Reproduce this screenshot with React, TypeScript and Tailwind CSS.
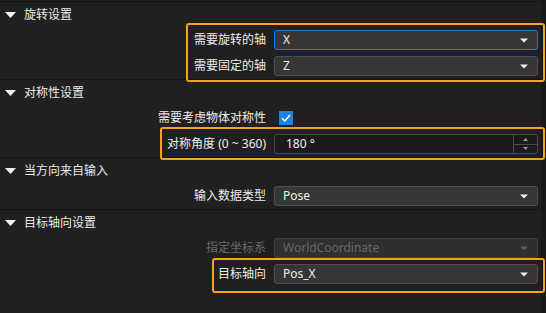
const FONT = { fontFamily: '"Noto Sans", "Noto Sans CJK SC", sans-serif' }

function Caret({ disabled }: { disabled?: boolean }) {
  return (
    <svg width="8" height="5" viewBox="0 0 8 5" className="shrink-0">
      <path d="M0 0.5 L8 0.5 L4 4.5 Z" fill={disabled ? '#5c5c5c' : '#f2f2f2'} />
    </svg>
  )
}

function Header({ title }: { title: string }) {
  return (
    <div className="flex items-center h-[26px] border-t border-[#141414]">
      <svg width="11" height="6" viewBox="0 0 11 6" className="ml-[5px] mr-[8px]">
        <path d="M0 0 L11 0 L5.5 6 Z" fill="#f0f0f0" />
      </svg>
      <span className="text-[12px] text-[#eaeaea]">{title}</span>
    </div>
  )
}

function Row({ label, disabled, children }: { label: string; disabled?: boolean; children: React.ReactNode }) {
  return (
    <div className="flex items-center h-[26px]">
      <div className={`w-[266px] text-right text-[12px] ${disabled ? 'text-[#6b6b6b]' : 'text-[#ececec]'}`}>{label}</div>
      <div className="flex-1 ml-[8px] mr-[3px]">{children}</div>
    </div>
  )
}

function Select({ value, focused, disabled }: { value: string; focused?: boolean; disabled?: boolean }) {
  const border = focused ? 'border-[#2674d4]' : disabled ? 'border-[#414141]' : 'border-[#4e4e4e]'
  const bg = disabled ? 'bg-[#2f2f2f]' : 'bg-[#363636]'
  return (
    <div className={`flex items-center h-[20px] rounded-[3px] border ${border} ${bg} pl-[8px] pr-[9px]`}>
      <span className={`flex-1 text-[12px] ${disabled ? 'text-[#676767]' : 'text-[#f0f0f0]'}`}>{value}</span>
      <Caret disabled={disabled} />
    </div>
  )
}

function SpinBox({ value }: { value: string }) {
  return (
    <div className="flex items-stretch h-[20px] rounded-[3px] border border-[#4a4a4a] bg-[#1b1b1b]">
      <span className="flex-1 flex items-center pl-[11px] text-[12px] text-[#f0f0f0]">{value}</span>
      <div className="w-[24px] flex flex-col border-l border-[#4a4a4a]">
        <div className="flex-1 flex items-center justify-center border-b border-[#4a4a4a]">
          <svg width="5" height="3" viewBox="0 0 5 3"><path d="M0 3 L5 3 L2.5 0 Z" fill="#9a9a9a" /></svg>
        </div>
        <div className="flex-1 flex items-center justify-center">
          <svg width="5" height="3" viewBox="0 0 5 3"><path d="M0 0 L5 0 L2.5 3 Z" fill="#9a9a9a" /></svg>
        </div>
      </div>
    </div>
  )
}

function Checkbox() {
  return (
    <div className="w-[14px] h-[14px] ml-[5px] bg-[#1f82e0] flex items-center justify-center">
      <svg width="10" height="8" viewBox="0 0 10 8">
        <path d="M1 4.2 L3.8 7 L9 1" stroke="#ffffff" strokeWidth="1.5" fill="none" />
      </svg>
    </div>
  )
}

function Highlight({ className }: { className: string }) {
  return <div className={`absolute border-2 border-[#f7a21c] rounded-[3px] pointer-events-none ${className}`} />
}

export default function App() {
  return (
    <div className="relative w-[546px] h-[313px] bg-[#181818] flex overflow-hidden" style={FONT}>
      <div className="w-[541px] bg-[#202020] pt-[1px]">
        <section>
          <Header title="旋转设置" />
          <Row label="需要旋转的轴">
            <Select value="X" focused />
          </Row>
          <Row label="需要固定的轴">
            <Select value="Z" />
          </Row>
        </section>

        <section>
          <Header title="对称性设置" />
          <Row label="需要考虑物体对称性">
            <Checkbox />
          </Row>
          <Row label="对称角度 (0 ~ 360)">
            <SpinBox value="180 °" />
          </Row>
        </section>

        <section>
          <Header title="当方向来自输入" />
          <Row label="输入数据类型">
            <Select value="Pose" />
          </Row>
        </section>

        <section>
          <Header title="目标轴向设置" />
          <Row label="指定坐标系" disabled>
            <Select value="WorldCoordinate" disabled />
          </Row>
          <Row label="目标轴向">
            <Select value="Pos_X" />
          </Row>
        </section>
      </div>

      <Highlight className="left-[186px] top-[23px] w-[359px] h-[59px]" />
      <Highlight className="left-[160px] top-[127px] w-[385px] h-[33px]" />
      <Highlight className="left-[212px] top-[258px] w-[333px] h-[35px]" />
    </div>
  )
}
